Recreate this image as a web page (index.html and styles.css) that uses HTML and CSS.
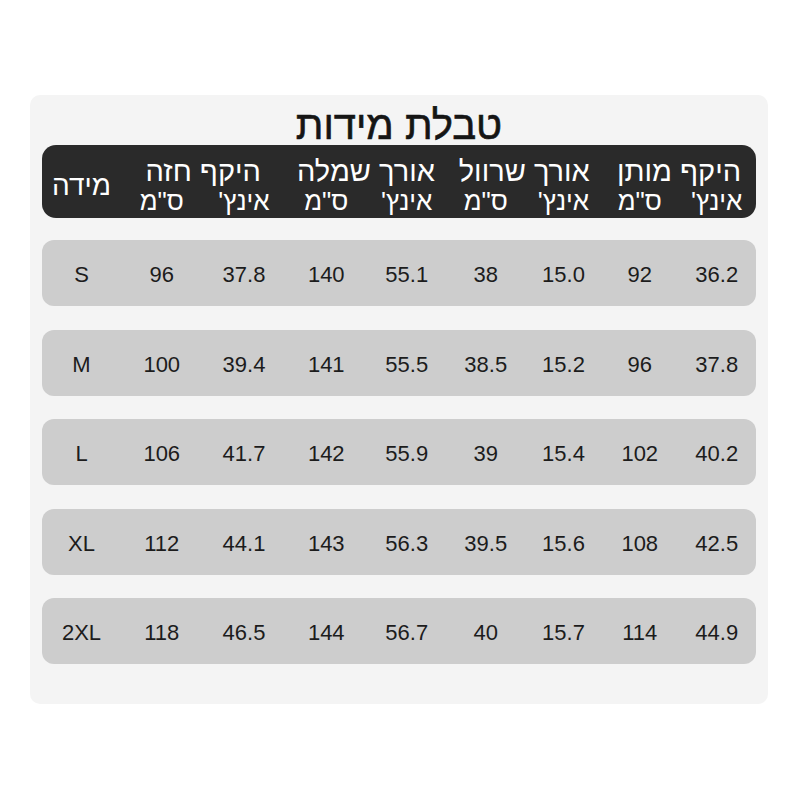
FILE: index.html
```html
<!DOCTYPE html>
<html lang="he">
<head>
<meta charset="utf-8">
<link rel="stylesheet" href="styles.css">
</head>
<body>
<div class="card">
  <h1 class="title" dir="rtl">טבלת מידות</h1>
  <div class="head">
    <div class="size-h" dir="rtl">מידה</div>
    <div class="grp g1" dir="rtl">היקף חזה</div>
    <div class="grp g2" dir="rtl">אורך שמלה</div>
    <div class="grp g3" dir="rtl">אורך שרוול</div>
    <div class="grp g4" dir="rtl">היקף מותן</div>
    <div class="sub c2" dir="rtl">ס"מ</div>
    <div class="sub c3" dir="rtl">אינץ'</div>
    <div class="sub c4" dir="rtl">ס"מ</div>
    <div class="sub c5" dir="rtl">אינץ'</div>
    <div class="sub c6" dir="rtl">ס"מ</div>
    <div class="sub c7" dir="rtl">אינץ'</div>
    <div class="sub c8" dir="rtl">ס"מ</div>
    <div class="sub c9" dir="rtl">אינץ'</div>
  </div>
  <div class="rows">
    <div class="row"><span>S</span><span>96</span><span>37.8</span><span>140</span><span>55.1</span><span>38</span><span>15.0</span><span>92</span><span>36.2</span></div>
    <div class="row"><span>M</span><span>100</span><span>39.4</span><span>141</span><span>55.5</span><span>38.5</span><span>15.2</span><span>96</span><span>37.8</span></div>
    <div class="row"><span>L</span><span>106</span><span>41.7</span><span>142</span><span>55.9</span><span>39</span><span>15.4</span><span>102</span><span>40.2</span></div>
    <div class="row"><span>XL</span><span>112</span><span>44.1</span><span>143</span><span>56.3</span><span>39.5</span><span>15.6</span><span>108</span><span>42.5</span></div>
    <div class="row"><span>2XL</span><span>118</span><span>46.5</span><span>144</span><span>56.7</span><span>40</span><span>15.7</span><span>114</span><span>44.9</span></div>
  </div>
</div>
</body>
</html>
```
FILE: styles.css
```css
html, body {
  margin: 0;
  padding: 0;
  background: #ffffff;
}
body {
  font-family: "Liberation Sans", "DejaVu Sans", Arial, sans-serif;
  color: #1e1e1e;
}
.card {
  margin: 95px 0 0 30px;
  width: 738px;
  height: 609px;
  box-sizing: border-box;
  padding: 10px 12px 0 12px;
  background: #f4f4f4;
  border-radius: 10px;
}
.title {
  margin: 0;
  font-size: 40px;
  line-height: 40px;
  font-weight: normal;
  text-align: center;
  color: #151515;
  -webkit-text-stroke: 0.6px #151515;
}
.head, .row {
  display: grid;
  grid-template-columns: 79px 81.5px 83px 81.5px 79.5px 78.5px 77px 75.5px 78.5px;
}
.head {
  height: 73px;
  box-sizing: border-box;
  padding-top: 11px;
  background: #2a2a2a;
  border-radius: 14px;
  color: #ffffff;
  grid-template-rows: 30px 31px;
}
.size-h {
  grid-column: 1;
  grid-row: 1 / 3;
  font-size: 28px;
  line-height: 59px;
  text-align: center;
}
.grp {
  grid-row: 1;
  font-size: 29px;
  line-height: 30px;
  text-align: center;
  white-space: nowrap;
}
.g1 { grid-column: 2 / 4; }
.g2 { grid-column: 4 / 6; }
.g3 { grid-column: 6 / 8; }
.g4 { grid-column: 8 / 10; }
.sub {
  grid-row: 2;
  font-size: 26px;
  line-height: 31px;
  text-align: center;
  white-space: nowrap;
}
.c2 { grid-column: 2; }
.c3 { grid-column: 3; }
.c4 { grid-column: 4; }
.c5 { grid-column: 5; }
.c6 { grid-column: 6; }
.c7 { grid-column: 7; }
.c8 { grid-column: 8; }
.c9 { grid-column: 9; }
.rows {
  margin-top: 22px;
  display: flex;
  flex-direction: column;
  gap: 23.5px;
}
.row {
  height: 66px;
  box-sizing: border-box;
  padding-top: 4px;
  background: #cdcdcd;
  border-radius: 12px;
}
.row span {
  font-size: 22px;
  line-height: 62px;
  text-align: center;
  color: #1c1c1c;
}
```
